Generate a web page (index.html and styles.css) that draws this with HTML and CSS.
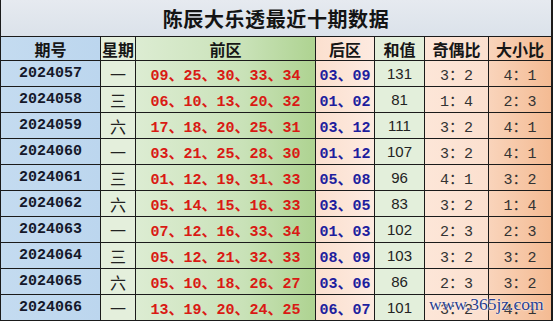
FILE: index.html
```html
<!DOCTYPE html>
<html lang="zh-CN">
<head>
<meta charset="utf-8">
<title>陈辰大乐透最近十期数据</title>
<link rel="stylesheet" href="styles.css">
</head>
<body>
<div class="board">
  <div class="grid">
    <div class="title">陈辰大乐透最近十期数据</div>

    <div class="h c-issue">期号</div>
    <div class="h c-week">星期</div>
    <div class="h c-front">前区</div>
    <div class="h c-back">后区</div>
    <div class="h c-sum">和值</div>
    <div class="h c-odd">奇偶比</div>
    <div class="h c-big">大小比</div>

    <div class="c-issue num">2024057</div><div class="c-week wk">一</div><div class="c-front red">09、25、30、33、34</div><div class="c-back blue">03、09</div><div class="c-sum s">131</div><div class="c-odd r">3：2</div><div class="c-big r">4：1</div>
    <div class="c-issue num">2024058</div><div class="c-week wk">三</div><div class="c-front red">06、10、13、20、32</div><div class="c-back blue">01、02</div><div class="c-sum s">81</div><div class="c-odd r">1：4</div><div class="c-big r">2：3</div>
    <div class="c-issue num">2024059</div><div class="c-week wk">六</div><div class="c-front red">17、18、20、25、31</div><div class="c-back blue">03、12</div><div class="c-sum s">111</div><div class="c-odd r">3：2</div><div class="c-big r">4：1</div>
    <div class="c-issue num">2024060</div><div class="c-week wk">一</div><div class="c-front red">03、21、25、28、30</div><div class="c-back blue">01、12</div><div class="c-sum s">107</div><div class="c-odd r">3：2</div><div class="c-big r">4：1</div>
    <div class="c-issue num">2024061</div><div class="c-week wk">三</div><div class="c-front red">01、12、19、31、33</div><div class="c-back blue">05、08</div><div class="c-sum s">96</div><div class="c-odd r">4：1</div><div class="c-big r">3：2</div>
    <div class="c-issue num">2024062</div><div class="c-week wk">六</div><div class="c-front red">05、14、15、16、33</div><div class="c-back blue">03、05</div><div class="c-sum s">83</div><div class="c-odd r">3：2</div><div class="c-big r">1：4</div>
    <div class="c-issue num">2024063</div><div class="c-week wk">一</div><div class="c-front red">07、12、16、33、34</div><div class="c-back blue">01、03</div><div class="c-sum s">102</div><div class="c-odd r">2：3</div><div class="c-big r">2：3</div>
    <div class="c-issue num">2024064</div><div class="c-week wk">三</div><div class="c-front red">05、12、21、32、33</div><div class="c-back blue">08、09</div><div class="c-sum s">103</div><div class="c-odd r">3：2</div><div class="c-big r">3：2</div>
    <div class="c-issue num">2024065</div><div class="c-week wk">六</div><div class="c-front red">05、10、18、26、27</div><div class="c-back blue">03、06</div><div class="c-sum s">86</div><div class="c-odd r">2：3</div><div class="c-big r">3：2</div>
    <div class="c-issue num">2024066</div><div class="c-week wk">一</div><div class="c-front red">13、19、20、24、25</div><div class="c-back blue">06、07</div><div class="c-sum s">101</div><div class="c-odd r">3：2</div><div class="c-big r">4：1</div>
  </div>
  <div class="watermark">www.365jz.com</div>
</div>
</body>
</html>
```

FILE: styles.css
```css
html, body {
  margin: 0;
  padding: 0;
  background: #ffffff;
}

.board {
  position: relative;
  width: 553px;
  height: 321px;
  overflow: hidden;
}

.grid {
  display: grid;
  grid-template-columns: 99px 34px 179px 58px 49px 63px 62px;
  grid-template-rows: 36px 23px repeat(10, 25px);
  gap: 1px;
  padding: 0 1px 1px 1px;
  background: #1b1b1b;
  width: 551px;
}

.grid > div {
  display: flex;
  align-items: center;
  justify-content: center;
  white-space: nowrap;
}

.title {
  grid-column: 1 / -1;
  background: linear-gradient(180deg, #e6eaf0 0%, #dbe2ea 100%);
  font-family: "Noto Sans CJK SC", sans-serif;
  font-size: 20px;
  font-weight: 700;
  letter-spacing: 0.6px;
  color: #141414;
  padding-top: 1px;
}

.h {
  font-family: "Noto Sans CJK SC", sans-serif;
  font-size: 16px;
  font-weight: 700;
  color: #161616;
}

.c-issue { background: linear-gradient(90deg, #c4dbf0 0%, #bcd6ee 100%); }
.c-week  { background: #e4efdc; }
.c-front { background: linear-gradient(90deg, #dcecd2 0%, #c9e2b8 60%, #aed391 100%); }
.c-back  { background: linear-gradient(90deg, #fbe0cf 0%, #fdeae0 100%); }
.c-sum   { background: #e3efdb; }
.c-odd   { background: linear-gradient(90deg, #fde6d8 0%, #fbe0cf 100%); }
.c-big   { background: linear-gradient(90deg, #f9d4bb 0%, #f4bb93 100%); }

.num {
  font-family: "Liberation Mono", monospace;
  font-weight: 700;
  font-size: 15px;
  color: #15182a;
}

.wk {
  font-family: "Noto Sans CJK SC", sans-serif;
  font-size: 16px;
  font-weight: 400;
  color: #222;
}

.red {
  font-family: "Liberation Mono", "Noto Sans CJK SC", monospace;
  font-weight: 700;
  font-size: 15px;
  color: #d91a14;
}

.blue {
  font-family: "Liberation Mono", "Noto Sans CJK SC", monospace;
  font-weight: 700;
  font-size: 15px;
  color: #1e1e9e;
}

.s {
  font-family: "Liberation Sans", sans-serif;
  font-size: 15px;
  color: #222;
}

.r {
  font-family: "Liberation Mono", "Noto Sans CJK SC", monospace;
  font-size: 15px;
  color: #333;
}

.watermark {
  position: absolute;
  left: 429px;
  top: 294px;
  font-family: "Liberation Serif", serif;
  font-size: 17.5px;
  color: #2b3d8c;
  text-shadow: 0 0 2px #ffffff, 0 0 1px #ffffff;
  letter-spacing: 0;
}
```
